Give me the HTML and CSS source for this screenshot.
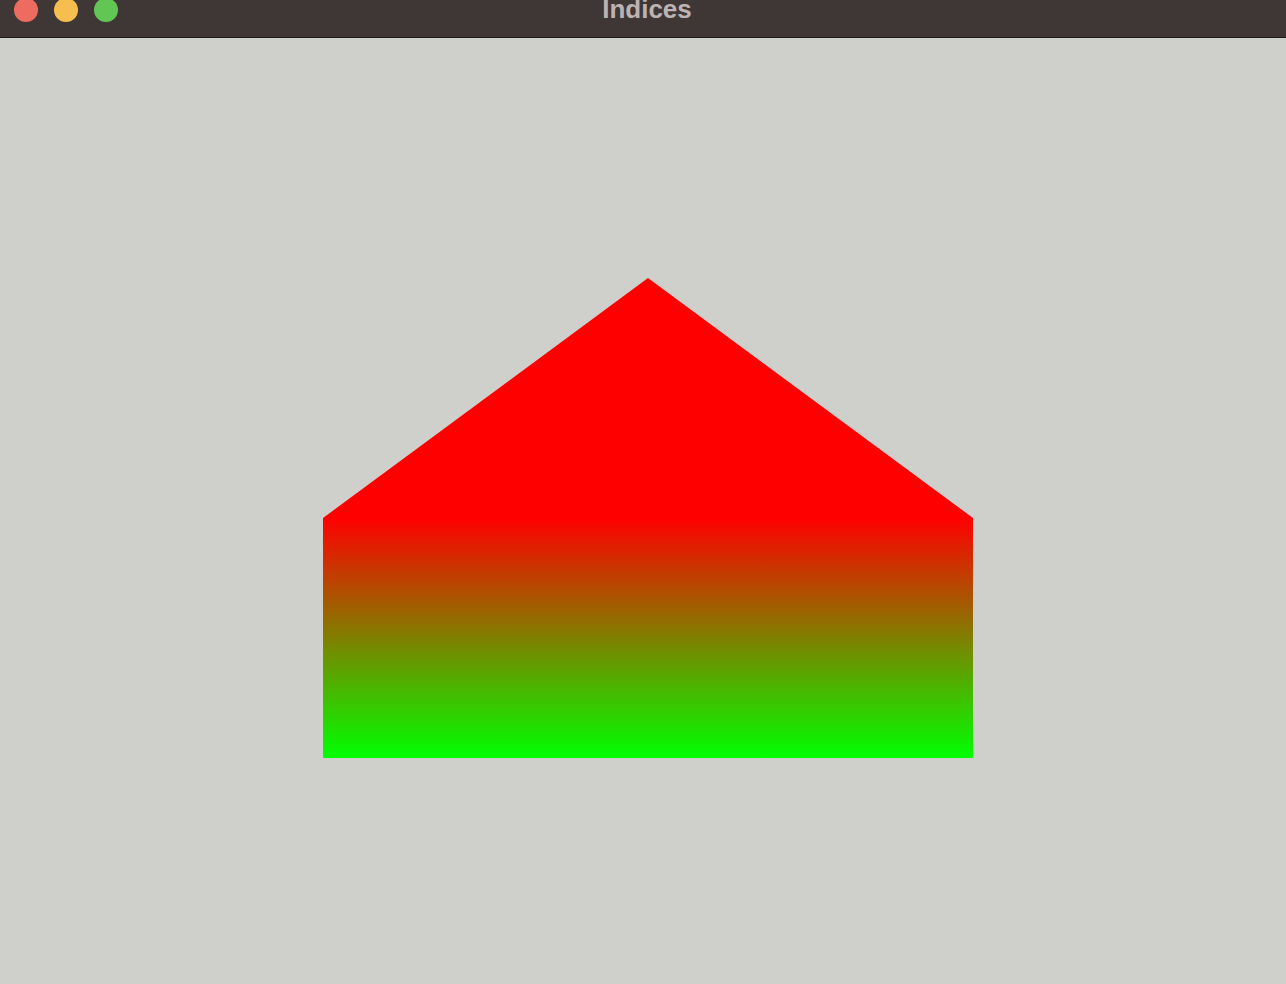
FILE: index.html
```html
<!DOCTYPE html>
<html>
<head>
<meta charset="utf-8">
<title>Indices</title>
<link rel="stylesheet" href="styles.css">
</head>
<body>
<div class="window">
  <div class="titlebar">
    <div class="lights">
      <span class="light red"></span>
      <span class="light yellow"></span>
      <span class="light green"></span>
    </div>
    <div class="title">Indices</div>
  </div>
  <div class="canvas">
    <svg class="scene" width="1286" height="946" viewBox="0 38 1286 946" xmlns="http://www.w3.org/2000/svg">
      <defs>
        <linearGradient id="g" gradientUnits="userSpaceOnUse" x1="0" y1="518" x2="0" y2="758">
          <stop offset="0" stop-color="#ff0000"/>
          <stop offset="1" stop-color="#00ff00"/>
        </linearGradient>
      </defs>
      <polygon points="323,518 648,278 973,518 973,758 323,758" fill="url(#g)"/>
    </svg>
  </div>
</div>
</body>
</html>
```
FILE: styles.css
```css
html, body {
  margin: 0;
  padding: 0;
  background: #cfd0cb;
  overflow: hidden;
}
.window {
  width: 1286px;
  height: 984px;
  display: flex;
  flex-direction: column;
}
.titlebar {
  position: relative;
  height: 37px;
  background: #3f3736;
  border-bottom: 1px solid #1e1b1b;
  flex: none;
}
.lights {
  display: flex;
  gap: 16px;
  padding-left: 14px;
  margin-top: -2px;
}
.light {
  width: 24px;
  height: 24px;
  border-radius: 50%;
  display: block;
}
.red { background: #ee6b60; }
.yellow { background: #f6be4f; }
.green { background: #62c655; }
.title {
  position: absolute;
  left: 8px;
  right: 0;
  top: -6px;
  text-align: center;
  font-family: "Liberation Sans", Arial, sans-serif;
  font-weight: bold;
  font-size: 26px;
  line-height: 30px;
  color: #bdb3b3;
}
.canvas {
  flex: 1;
  background: #cfd0cb;
}
.scene {
  display: block;
}
```
